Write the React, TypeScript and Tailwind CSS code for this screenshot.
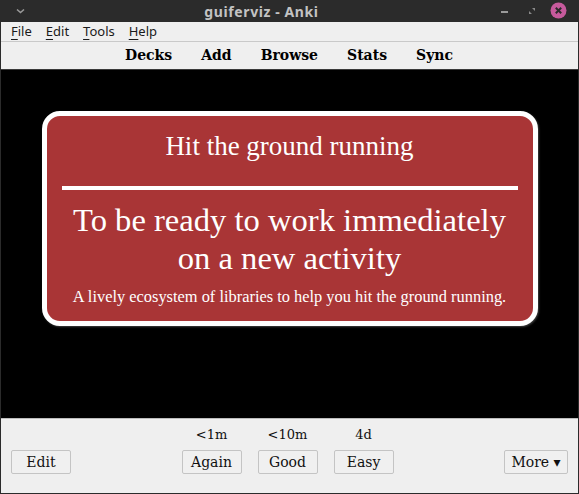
import React from "react";

const serif = "font-['DejaVu_Serif',serif]";
const cardSerif = "font-['Liberation_Serif',serif]";

function MenuItem({ label }: { label: string }) {
  return (
    <span>
      <span className="underline underline-offset-[3px] decoration-1">{label[0]}</span>
      {label.slice(1)}
    </span>
  );
}

function AnswerButton({ label, className = "" }: { label: string; className?: string }) {
  return (
    <button
      className={`h-[24px] rounded-[2px] border border-[#c4c4c4] bg-[#f0f0f0] text-[14px] leading-none text-[#111] ${className}`}
    >
      {label}
    </button>
  );
}

export default function App() {
  return (
    <div className="flex h-[494px] w-[579px] flex-col bg-[#2b2b2b]">
      {/* title bar */}
      <div className="relative flex h-[22px] shrink-0 items-center justify-center font-['Noto_Sans',sans-serif]">
        <svg className="absolute left-[16px] top-[8px]" width="9" height="6" viewBox="0 0 9 6">
          <path d="M1 1.5 L4.5 4.5 L8 1.5" stroke="#9a9a9a" strokeWidth="1.6" fill="none" />
        </svg>
        <span className="pr-[56px] text-[14px] font-bold tracking-[0.6px] text-[#c3c3c3]">guiferviz - Anki</span>
        <div className="absolute right-[12px] top-[2px] flex items-center">
          <span className="mt-[2px] h-[2px] w-[7px] bg-[#9a9a9a]" />
          <svg className="ml-[20px]" width="8" height="8" viewBox="0 0 8 8">
            <path d="M1 7 L1 4 L4 7 Z M7 1 L7 4 L4 1 Z" fill="#8a8a8a" />
          </svg>
          <svg className="ml-[14px]" width="17" height="17" viewBox="0 0 17 17">
            <circle cx="8.5" cy="8.5" r="8" fill="#c65a9c" />
            <path d="M5.8 5.8 L11.2 11.2 M11.2 5.8 L5.8 11.2" stroke="#2b2b2b" strokeWidth="2" />
          </svg>
        </div>
      </div>

      <div className="mx-px mb-px flex flex-1 flex-col bg-[#efefef]">
        {/* menu bar */}
        <div className="flex h-[20px] items-center gap-[14px] border-b border-[#c9c9c9] pl-[10px] pt-[1px] font-['Noto_Sans',sans-serif] text-[13px] text-[#1a1a1a]">
          <MenuItem label="File" />
          <MenuItem label="Edit" />
          <MenuItem label="Tools" />
          <MenuItem label="Help" />
        </div>

        {/* toolbar */}
        <div
          className={`flex h-[28px] items-center justify-center gap-[29px] border-b border-[#3a3a3a] pr-[1px] text-[14px] font-bold text-black ${serif}`}
        >
          <span>Decks</span>
          <span>Add</span>
          <span>Browse</span>
          <span>Stats</span>
          <span>Sync</span>
        </div>

        {/* reviewer */}
        <div className="flex flex-1 justify-center bg-black pt-[41px]">
          <div
            className={`h-[215px] w-[496px] rounded-[18px] border-[5px] border-white bg-[#a93536] px-[15px] pt-[15px] text-center text-white shadow-[1px_1px_2px_rgba(140,140,140,0.45)] ${cardSerif}`}
          >
            <div className="text-[27px] leading-[30px]">Hit the ground running</div>
            <div className="mt-[25px] h-[4px] bg-white" />
            <div className="mt-[11px] text-[32.6px] leading-[38px]">
              To be ready to work immediately
              <br />
              on a new activity
            </div>
            <div className="mt-[10px] text-[16.4px] leading-[20px]">
              A lively ecosystem of libraries to help you hit the ground running.
            </div>
          </div>
        </div>

        {/* answer bar */}
        <div className={`flex h-[75px] items-start justify-between border-t border-[#bdbdbd] px-[10px] pt-[8px] ${serif}`}>
          <div className="pt-[23px]">
            <AnswerButton label="Edit" className="w-[60px]" />
          </div>
          <div className="flex gap-[16px]">
            {[
              ["<1m", "Again"],
              ["<10m", "Good"],
              ["4d", "Easy"],
            ].map(([t, l]) => (
              <div key={l} className="flex w-[60px] flex-col items-center">
                <span className="h-[16px] text-[13px] leading-[16px] text-[#111]">{t}</span>
                <AnswerButton label={l} className="mt-[7px] w-[60px]" />
              </div>
            ))}
          </div>
          <div className="pt-[23px]">
            <AnswerButton label="More ▾" className="w-[64px]" />
          </div>
        </div>
      </div>
    </div>
  );
}
